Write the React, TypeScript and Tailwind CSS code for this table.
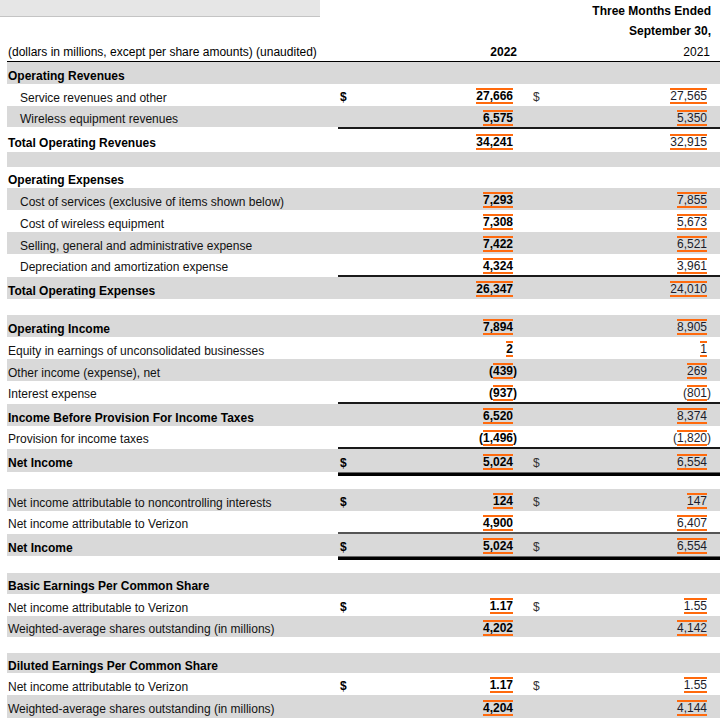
import React from 'react';

type Val = { v: string; neg?: boolean };

type Line =
  | {
      kind: 'row';
      label: string;
      h: string;
      gray?: boolean;
      bold?: boolean;
      indent?: boolean;
      dollar?: boolean;
      a?: Val;
      b?: Val;
    }
  | { kind: 'blank'; h: string; gray?: boolean }
  | { kind: 'rule'; type: 'single' | 'double' | 'soft' };

const n = (v: string): Val => ({ v });
const neg = (v: string): Val => ({ v, neg: true });

const lines: Line[] = [
  { kind: 'row', label: 'Operating Revenues', h: 'h-[22px]', gray: true, bold: true },
  { kind: 'row', label: 'Service revenues and other', h: 'h-[22px]', indent: true, dollar: true, a: n('27,666'), b: n('27,565') },
  { kind: 'row', label: 'Wireless equipment revenues', h: 'h-[21px]', gray: true, indent: true, a: n('6,575'), b: n('5,350') },
  { kind: 'rule', type: 'single' },
  { kind: 'row', label: 'Total Operating Revenues', h: 'h-[23px]', bold: true, a: n('34,241'), b: n('32,915') },
  { kind: 'blank', h: 'h-[15px]', gray: true },
  { kind: 'row', label: 'Operating Expenses', h: 'h-[21px]', bold: true },
  { kind: 'row', label: 'Cost of services (exclusive of items shown below)', h: 'h-[22px]', gray: true, indent: true, a: n('7,293'), b: n('7,855') },
  { kind: 'row', label: 'Cost of wireless equipment', h: 'h-[22px]', indent: true, a: n('7,308'), b: n('5,673') },
  { kind: 'row', label: 'Selling, general and administrative expense', h: 'h-[22px]', gray: true, indent: true, a: n('7,422'), b: n('6,521') },
  { kind: 'row', label: 'Depreciation and amortization expense', h: 'h-[21px]', indent: true, a: n('4,324'), b: n('3,961') },
  { kind: 'rule', type: 'single' },
  { kind: 'row', label: 'Total Operating Expenses', h: 'h-[22px]', gray: true, bold: true, a: n('26,347'), b: n('24,010') },
  { kind: 'blank', h: 'h-[16px]' },
  { kind: 'row', label: 'Operating Income', h: 'h-[22px]', gray: true, bold: true, a: n('7,894'), b: n('8,905') },
  { kind: 'row', label: 'Equity in earnings of unconsolidated businesses', h: 'h-[22px]', a: n('2'), b: n('1') },
  { kind: 'row', label: 'Other income (expense), net', h: 'h-[22px]', gray: true, a: neg('439'), b: n('269') },
  { kind: 'row', label: 'Interest expense', h: 'h-[21px]', a: neg('937'), b: neg('801') },
  { kind: 'rule', type: 'single' },
  { kind: 'row', label: 'Income Before Provision For Income Taxes', h: 'h-[22px]', gray: true, bold: true, a: n('6,520'), b: n('8,374') },
  { kind: 'row', label: 'Provision for income taxes', h: 'h-[21px]', a: neg('1,496'), b: neg('1,820') },
  { kind: 'rule', type: 'single' },
  { kind: 'row', label: 'Net Income', h: 'h-[23px]', gray: true, bold: true, dollar: true, a: n('5,024'), b: n('6,554') },
  { kind: 'rule', type: 'double' },
  { kind: 'blank', h: 'h-[13px]' },
  { kind: 'row', label: 'Net income attributable to noncontrolling interests', h: 'h-[22px]', gray: true, dollar: true, a: n('124'), b: n('147') },
  { kind: 'row', label: 'Net income attributable to Verizon', h: 'h-[21px]', a: n('4,900'), b: n('6,407') },
  { kind: 'rule', type: 'soft' },
  { kind: 'row', label: 'Net Income', h: 'h-[22px]', gray: true, bold: true, dollar: true, a: n('5,024'), b: n('6,554') },
  { kind: 'rule', type: 'double' },
  { kind: 'blank', h: 'h-[13px]' },
  { kind: 'row', label: 'Basic Earnings Per Common Share', h: 'h-[21px]', gray: true, bold: true },
  { kind: 'row', label: 'Net income attributable to Verizon', h: 'h-[22px]', dollar: true, a: n('1.17'), b: n('1.55') },
  { kind: 'row', label: 'Weighted-average shares outstanding (in millions)', h: 'h-[21px]', gray: true, a: n('4,202'), b: n('4,142') },
  { kind: 'blank', h: 'h-[16px]' },
  { kind: 'row', label: 'Diluted Earnings Per Common Share', h: 'h-[20px]', gray: true, bold: true },
  { kind: 'row', label: 'Net income attributable to Verizon', h: 'h-[22px]', dollar: true, a: n('1.17'), b: n('1.55') },
  { kind: 'row', label: 'Weighted-average shares outstanding (in millions)', h: 'h-[23px]', gray: true, a: n('4,204'), b: n('4,144') },
];

const Amount = ({ val, current }: { val?: Val; current: boolean }) => {
  if (!val) return null;
  const tone = current ? 'font-bold text-black' : 'text-[#1c1c2a]';
  return (
    <div className={`flex items-center ${tone}`}>
      {val.neg && <span className="leading-[12px]">(</span>}
      <span className="h-[16px] border-y-2 border-[#ff6a0d] leading-[12px]">{val.v}</span>
      <span className="w-[5px] leading-[12px]">{val.neg ? ')' : ''}</span>
    </div>
  );
};

const Row = ({ line }: { line: Extract<Line, { kind: 'row' }> }) => (
  <div className={`flex items-center ${line.h} ${line.gray ? 'bg-[#d9d9d9]' : ''}`}>
    <div
      className={`w-[313px] pt-[5px] ${line.indent ? 'pl-[13px]' : 'pl-[1px]'} ${
        line.bold ? 'font-bold text-black' : 'text-[#111]'
      }`}
    >
      {line.label}
    </div>
    <div className="w-[18px]" />
    <div className="flex w-[180px] items-center justify-between pt-[2px]">
      <span className="pl-[2px] pt-[2px] font-bold text-black">{line.dollar ? '$' : ''}</span>
      <Amount val={line.a} current />
    </div>
    <div className="flex w-[202px] items-center justify-between pr-[8px] pt-[2px]">
      <span className="pl-[15px] pt-[2px] text-[#333]">{line.dollar ? '$' : ''}</span>
      <Amount val={line.b} current={false} />
    </div>
  </div>
);

const Rule = ({ type }: { type: 'single' | 'double' | 'soft' }) => {
  if (type === 'double') {
    return (
      <div className="ml-[331px] h-[4px] w-[382px] border-t border-[#666] bg-black" />
    );
  }
  return (
    <div className={`ml-[331px] h-[2px] w-[382px] ${type === 'soft' ? 'bg-[#555]' : 'bg-[#1a1a1a]'}`} />
  );
};

export default function App() {
  return (
    <div className="h-[724px] w-[723px] bg-white font-['Liberation_Sans',Arial,sans-serif] text-[12px] leading-[14px] text-black">
      {/* column heading */}
      <div className="flex h-[18px]">
        <div className="h-[17px] w-[320px] border-b border-[#c4c4c4] bg-[#e6e6e6]" />
        <div className="flex flex-1 items-center justify-end pr-[12px] pt-[4px] font-bold">
          Three Months Ended
        </div>
      </div>
      <div className="flex h-[22px] items-center justify-end pr-[12px] pt-[4px] font-bold">
        September 30,
      </div>
      <div className="ml-[7px] flex h-[22px] w-[713px] items-center border-b border-black pt-[3px]">
        <div className="w-[313px] pl-[1px]">(dollars in millions, except per share amounts) (unaudited)</div>
        <div className="w-[198px] pr-[1px] text-right font-bold">2022</div>
        <div className="w-[202px] pr-[10px] text-right">2021</div>
      </div>

      <div className="ml-[7px] w-[713px]">
        {lines.map((line, i) => {
          if (line.kind === 'rule') return <Rule key={i} type={line.type} />;
          if (line.kind === 'blank')
            return <div key={i} className={`${line.h} ${line.gray ? 'bg-[#d9d9d9]' : ''}`} />;
          return <Row key={i} line={line} />;
        })}
      </div>
    </div>
  );
}
